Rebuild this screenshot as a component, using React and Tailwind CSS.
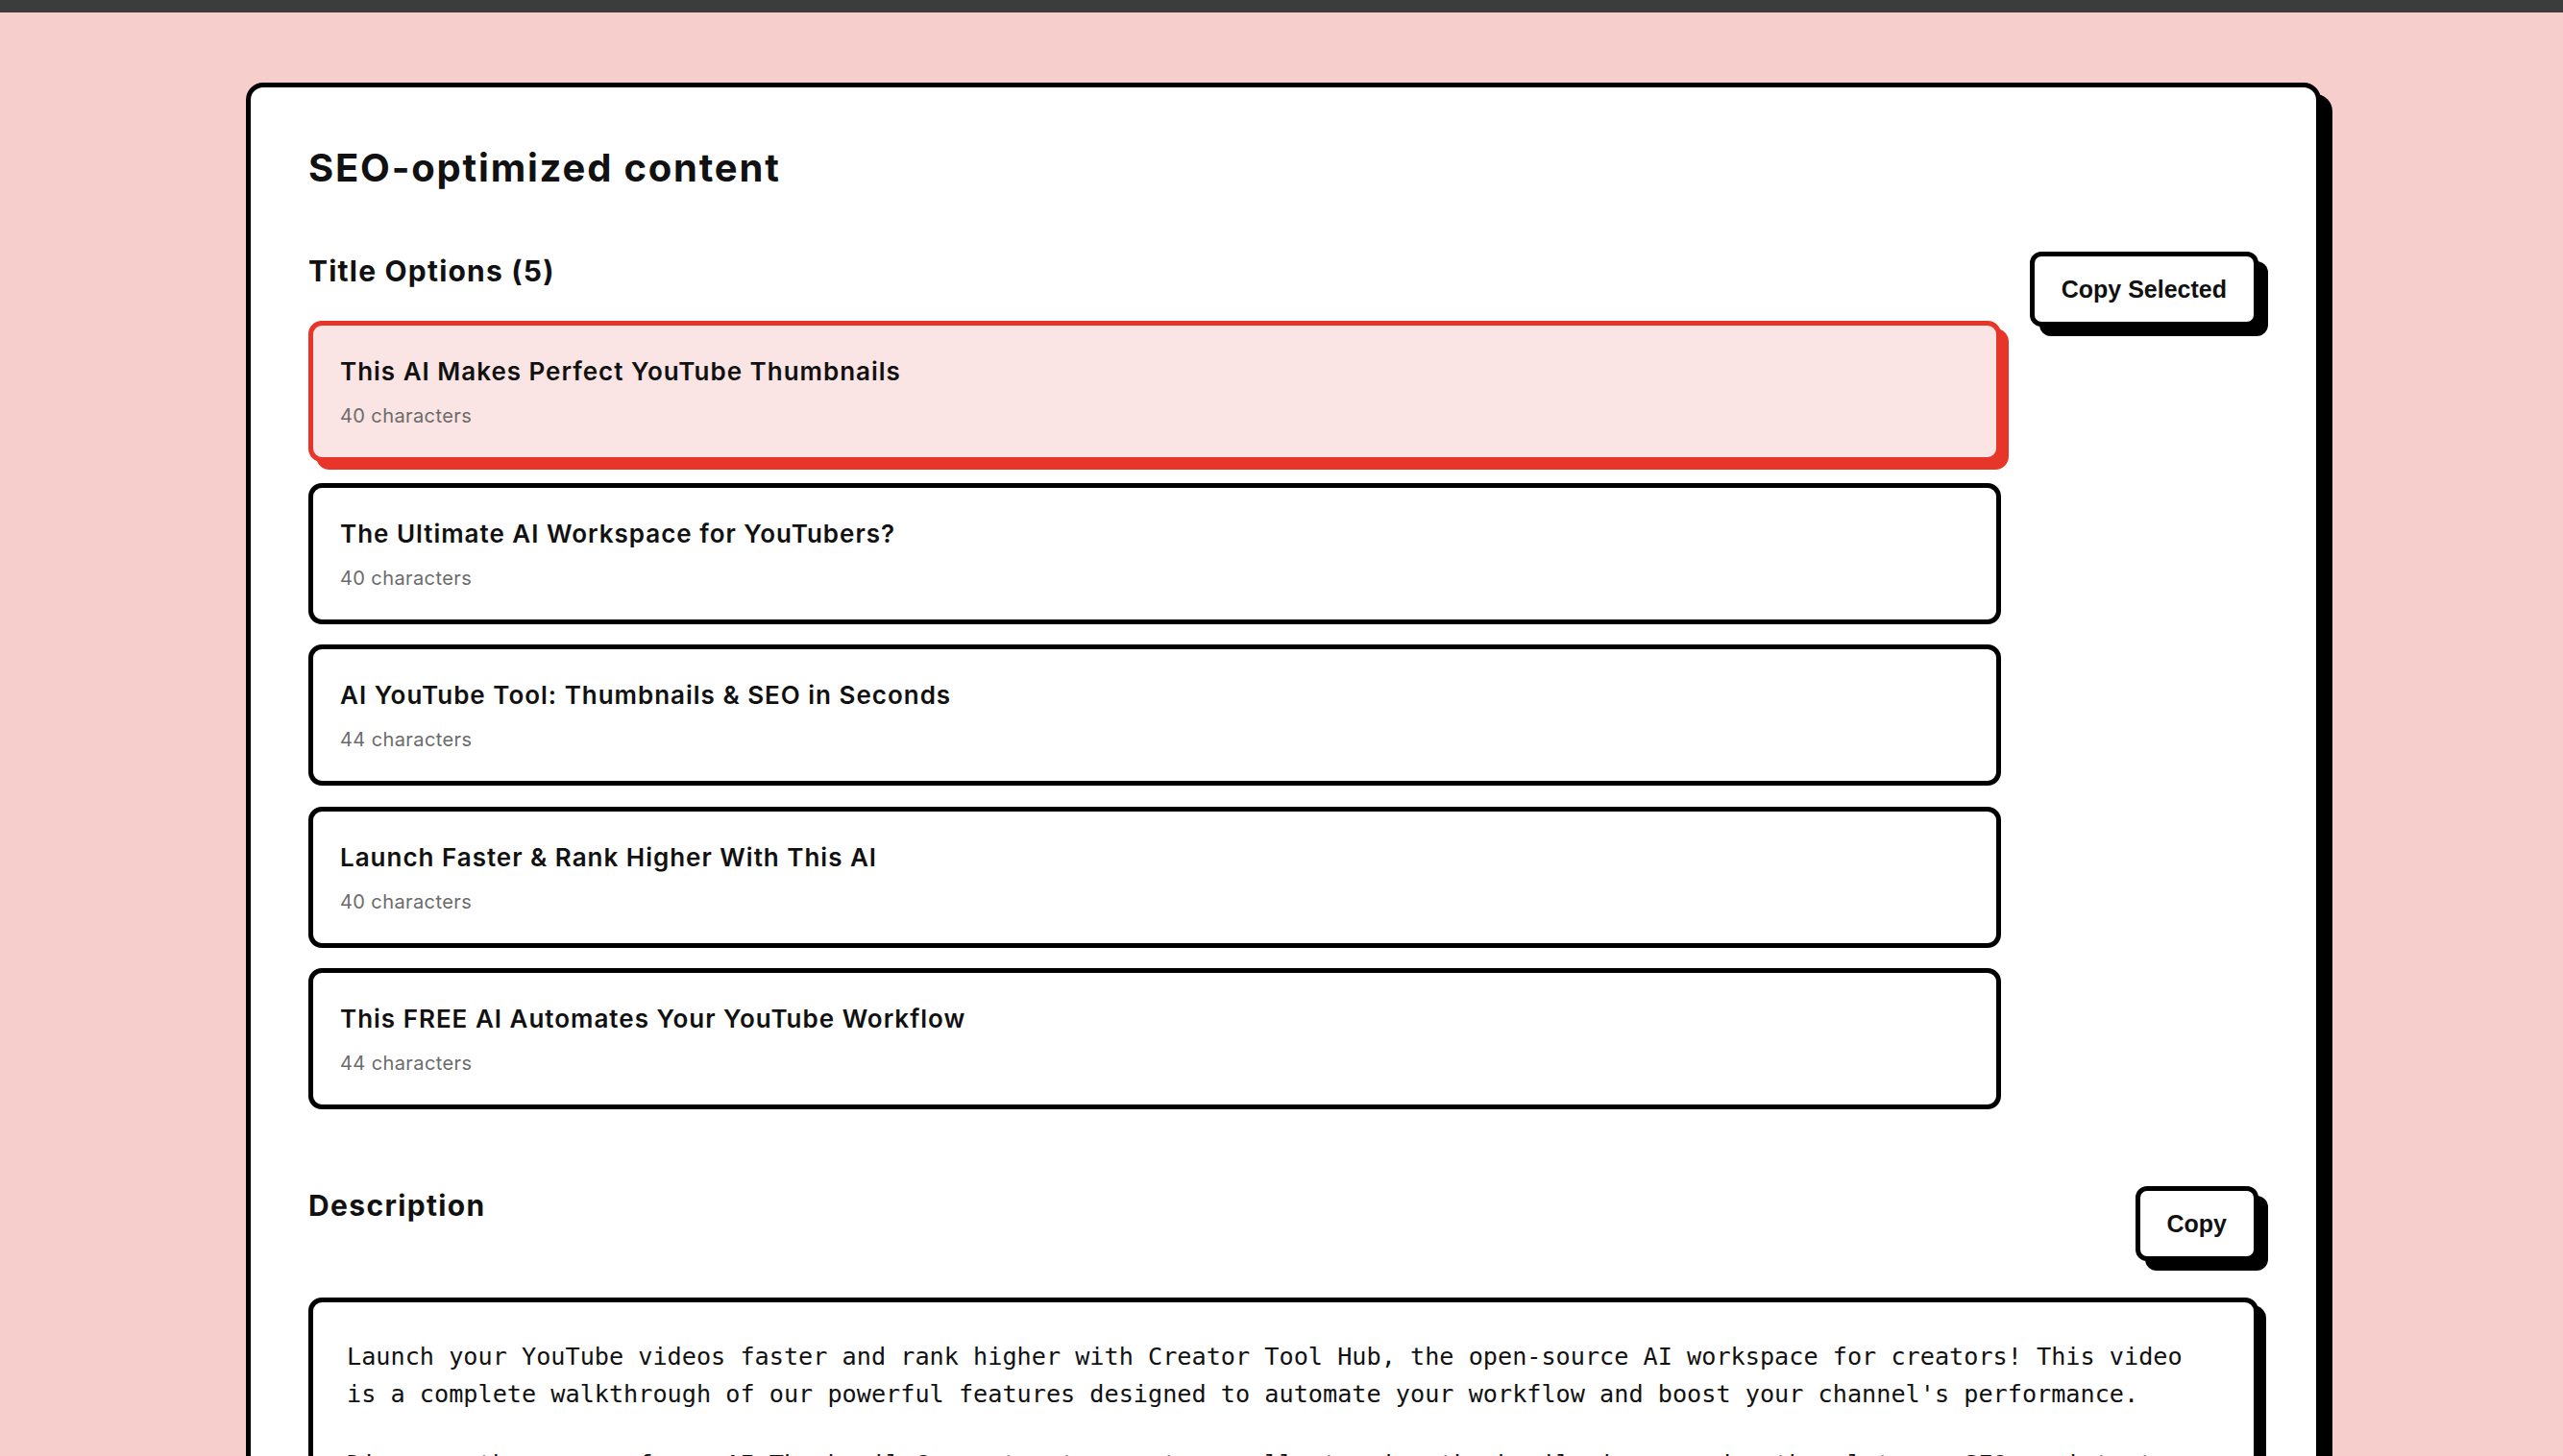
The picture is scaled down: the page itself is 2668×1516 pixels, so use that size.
import React, { useState } from "react";

const titles = [
  { text: "This AI Makes Perfect YouTube Thumbnails", count: 40 },
  { text: "The Ultimate AI Workspace for YouTubers?", count: 40 },
  { text: "AI YouTube Tool: Thumbnails & SEO in Seconds", count: 44 },
  { text: "Launch Faster & Rank Higher With This AI", count: 40 },
  { text: "This FREE AI Automates Your YouTube Workflow", count: 44 },
];

const paragraphs = [
  "Launch your YouTube videos faster and rank higher with Creator Tool Hub, the open-source AI workspace for creators! This video is a complete walkthrough of our powerful features designed to automate your workflow and boost your channel's performance.",
  "Discover the power of our AI Thumbnail Generator to create scroll-stopping thumbnails in seconds, then let our SEO assistant write optimized titles, descriptions and tags for you.",
];

// 버튼 (검정 테두리 + 그림자)
function CopyButton({ label }) {
  return (
    <button
      type="button"
      className="shrink-0 bg-white border-[5px] border-black rounded-[12px] px-[28px] py-[19px] text-[25px] leading-[30px] font-bold text-[#111] shadow-[10px_10px_0_0_#000] font-['Liberation_Sans',Arial,sans-serif]"
    >
      {label}
    </button>
  );
}

function TitleOption({ item, selected, onClick }) {
  return (
    <div
      onClick={onClick}
      className={
        selected
          ? "cursor-pointer rounded-[14px] border-[5px] border-[#e8352a] bg-[#fbe4e4] p-[28px] shadow-[8px_8px_0_0_#e8352a]"
          : "cursor-pointer rounded-[14px] border-[5px] border-black bg-white p-[28px]"
      }
    >
      <div className="text-[26px] leading-[39px] font-semibold tracking-[0.038em] text-[#111]">
        {item.text}
      </div>
      <div className="mt-3 text-[20px] leading-[30px] tracking-[0.02em] text-[#6b6b6b]">
        {item.count} characters
      </div>
    </div>
  );
}

export default function App() {
  const [selected, setSelected] = useState(0);

  return (
    <div className="min-h-screen bg-[#f6cfcd] font-['Inter','Noto_Sans',sans-serif]">
      {/* 상단 바 */}
      <div className="h-[13px] bg-[#3c3c3c]" />

      <div className="ml-[256px] mt-[73px] w-[2160px] rounded-[18px] border-[5px] border-black bg-white p-[60px] shadow-[12px_12px_0_0_#000]">
        <h2 className="text-[40px] leading-[48px] font-bold tracking-[0.045em] text-[#111]">
          SEO-optimized content
        </h2>

        {/* 제목 옵션 */}
        <div className="mt-[63px] flex items-start gap-[30px]">
          <div className="flex-1">
            <h3 className="mb-[32px] text-[30px] leading-[40px] font-bold tracking-[0.04em] text-[#111]">
              Title Options ({titles.length})
            </h3>
            <div className="flex flex-col gap-[21.5px]">
              {titles.map((item, i) => (
                <TitleOption
                  key={i}
                  item={item}
                  selected={selected === i}
                  onClick={() => setSelected(i)}
                />
              ))}
            </div>
          </div>
          <CopyButton label="Copy Selected" />
        </div>

        {/* 설명 */}
        <div className="mt-[80px] flex items-start justify-between">
          <h3 className="text-[30px] leading-[40px] font-bold tracking-[0.045em] text-[#111]">
            Description
          </h3>
          <CopyButton label="Copy" />
        </div>
        <div className="mt-[38px] flex flex-col gap-[34px] rounded-[14px] border-[5px] border-black bg-white px-[35px] pt-[37px] pb-[35px] shadow-[8px_8px_0_0_#000]">
          {paragraphs.map((text, i) => (
            <p
              key={i}
              className="text-[25.2px] leading-[39px] text-[#111] font-['DejaVu_Sans_Mono','Liberation_Mono',monospace]"
            >
              {text}
            </p>
          ))}
        </div>
      </div>
    </div>
  );
}
